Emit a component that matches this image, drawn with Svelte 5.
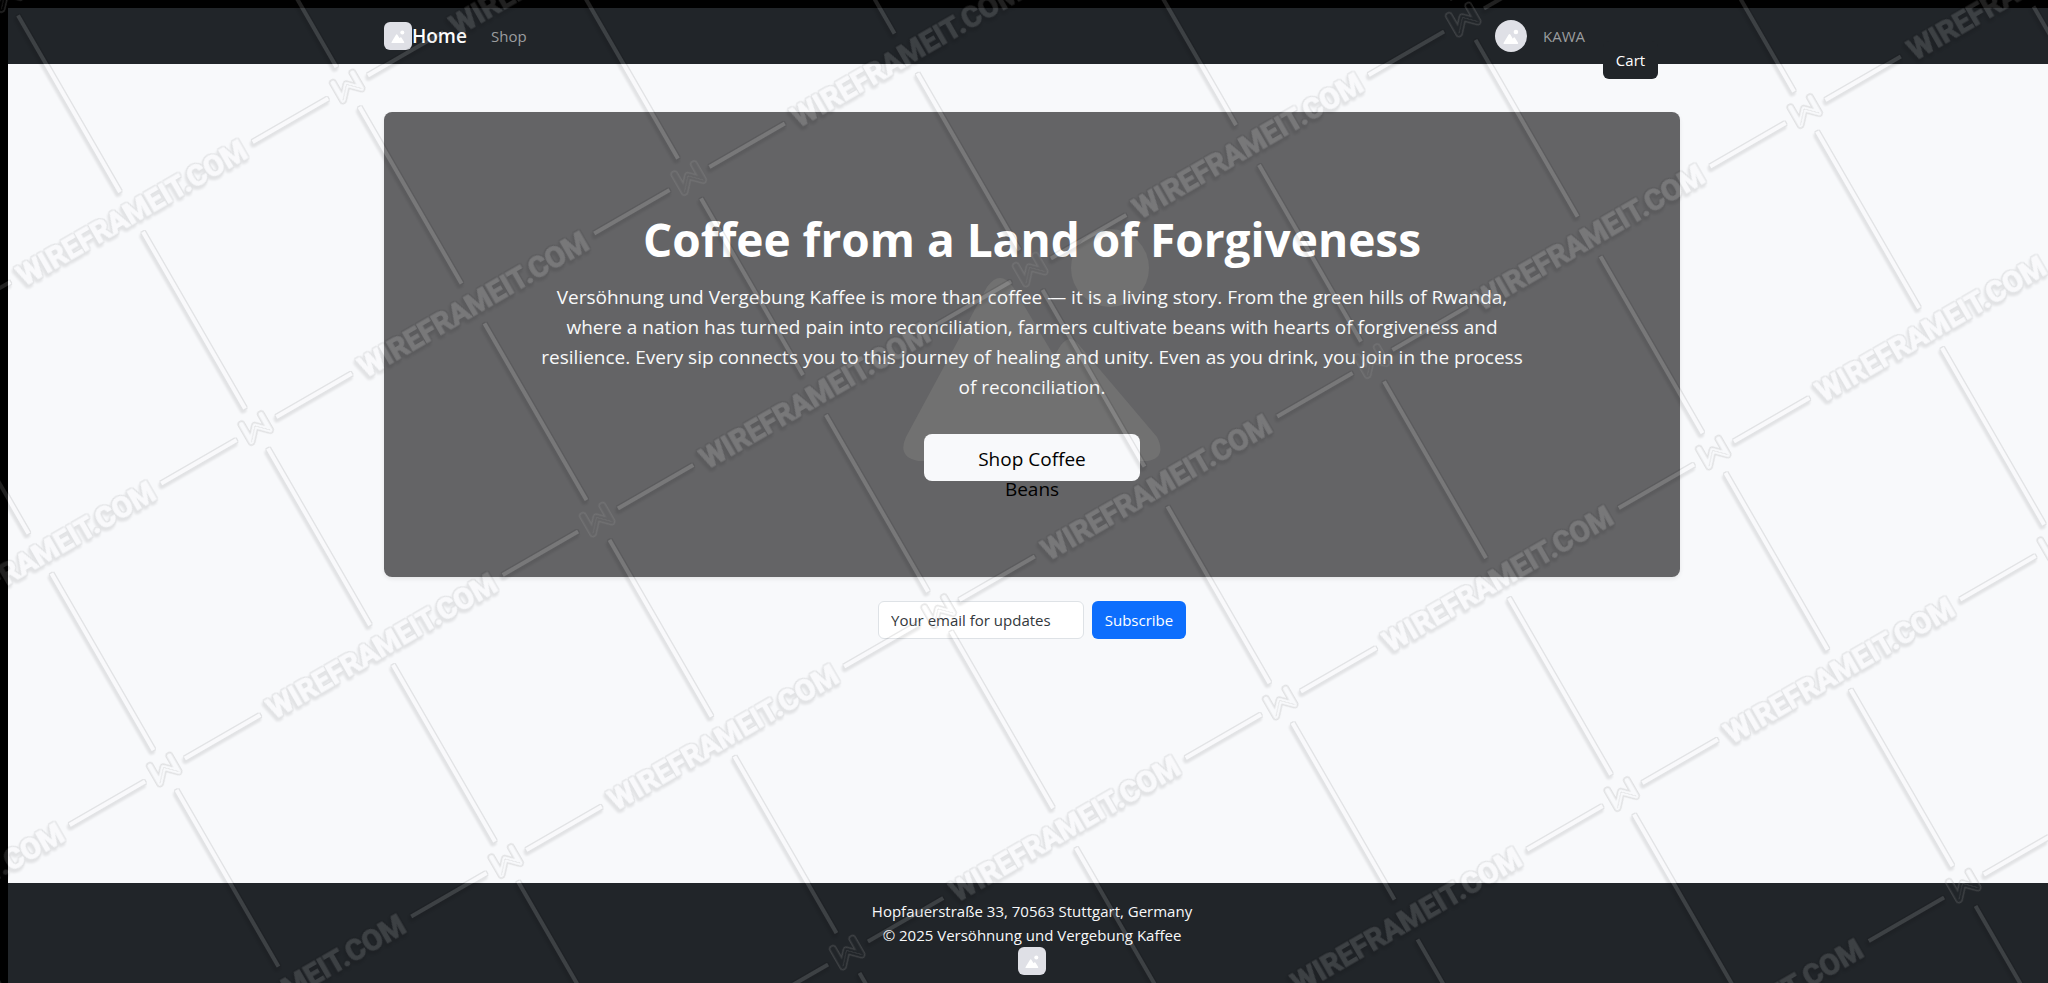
<script>
  const lines = [
    [23, 0, 110, 0], [-110, 0, -23, 0],
    [273, 250, 360, 250], [140, 250, 227, 250],
    [0, 23, 0, 227], [0, 273, 0, 477], [0, -227, 0, -23],
    [250, 23, 250, 227], [250, 273, 250, 477], [250, -227, 250, -23]
  ];
  const labels = [[250, 0], [-250, 0], [0, 250], [500, 250]];
  const marks = [[0, 0], [250, 250]];
</script>

{#snippet picture()}
  <svg viewBox="0 0 28 28" aria-hidden="true">
    <path d="M7.600 20L12 12.700Q12.700 11.700 13.400 12.700L15.600 16.300L16.200 15.500Q16.800 14.800 17.400 15.500L20.200 20Q20.500 21 19.800 21H7.800Q7.100 21 7.600 20Z" fill="#fff" />
    <circle cx="18.300" cy="10.500" r="2" fill="#fff" />
  </svg>
{/snippet}

<div class="page">
  <nav>
    <div class="container bar">
      <a class="brand" href="#home"><span class="thumb">{@render picture()}</span>Home</a>
      <a class="link" href="#shop">Shop</a>
      <div class="account">
        <span class="thumb round">{@render picture()}</span>
        <a class="link" href="#account">KAWA</a>
        <button class="cart" type="button">Cart</button>
      </div>
    </div>
  </nav>

  <main>
    <section class="hero container">
      <svg class="backdrop" viewBox="0 0 260 232" aria-hidden="true">
        <g fill="#717171">
          <circle cx="207" cy="39" r="39" />
          <path d="M84 58Q97 40 110 58L151 127L158 116Q167 104 176 116L254 208Q264 228 245 232H15Q-6 228 3 208Z" />
        </g>
      </svg>
      <h1>Coffee from a Land of Forgiveness</h1>
      <p>Versöhnung und Vergebung Kaffee is more than coffee — it is a living story. From the green hills of Rwanda, where a nation has turned pain into reconciliation, farmers cultivate beans with hearts of forgiveness and resilience. Every sip connects you to this journey of healing and unity. Even as you drink, you join in the process of reconciliation.</p>
      <a class="shop" href="#shop">Shop Coffee Beans</a>
    </section>
    <form>
      <input type="email" placeholder="Your email for updates" aria-label="Your email for updates" />
      <button class="subscribe" type="button">Subscribe</button>
    </form>
  </main>

  <footer>
    <div>Hopfauerstraße 33, 70563 Stuttgart, Germany</div>
    <div>© 2025 Versöhnung und Vergebung Kaffee</div>
    <span class="thumb">{@render picture()}</span>
  </footer>

  <svg class="watermark" aria-hidden="true">
    <defs>
      <mask id="hollow" maskUnits="userSpaceOnUse" x="-20" y="-20" width="40" height="40">
        <path class="mark" stroke="#fff" stroke-width="8" d="M-11 -11V9L0 -3L11 8V-10" />
        <path class="mark" stroke="#000" stroke-width="5" d="M-11 -11V9L0 -3L11 8V-10" />
        <path class="mark" stroke="#fff" stroke-width="1" d="M-11 9L0 -3L11 8" />
      </mask>
      <pattern id="tile" x="-125" y="-125" width="500" height="500" patternUnits="userSpaceOnUse" patternTransform="translate(1031 270) rotate(-30)" viewBox="-125 -125 500 500">
        {#each lines as [x1, y1, x2, y2]}
          <line {x1} {y1} {x2} {y2} />
        {/each}
        {#each labels as [x, y]}
          <text {x} y={y + 11}>WIREFRAMEIT.COM</text>
        {/each}
      </pattern>
      <pattern id="marks" x="-125" y="-125" width="500" height="500" patternUnits="userSpaceOnUse" patternTransform="translate(1031 270) rotate(-30)" viewBox="-125 -125 500 500">
        {#each marks as [x, y]}
          <g transform="translate({x} {y})">
            <rect x="-20" y="-20" width="40" height="40" fill="#999" fill-opacity="0.25" mask="url(#hollow)" />
          </g>
        {/each}
      </pattern>
      <filter id="emboss" x="0" y="0" width="100%" height="100%" color-interpolation-filters="sRGB">
        <feMorphology in="SourceAlpha" operator="dilate" radius="1" result="rim" />
        <feOffset in="rim" dx="-1" dy="3" result="moved" />
        <feGaussianBlur in="moved" stdDeviation="1" result="soft" />
        <feMerge result="both">
          <feMergeNode in="rim" />
          <feMergeNode in="soft" />
        </feMerge>
        <feComposite in="both" in2="SourceAlpha" operator="out" result="outer" />
        <feComponentTransfer in="outer" result="dark">
          <feFuncA type="linear" slope="0.09" />
        </feComponentTransfer>
        <feComponentTransfer in="SourceGraphic" result="light">
          <feFuncA type="linear" slope="0.13" />
        </feComponentTransfer>
        <feMerge>
          <feMergeNode in="dark" />
          <feMergeNode in="light" />
        </feMerge>
      </filter>
    </defs>
    <rect width="100%" height="100%" fill="url(#tile)" filter="url(#emboss)" />
    <rect width="100%" height="100%" fill="url(#marks)" />
  </svg>
</div>

<style>
  :global(body) { margin: 0; background: #000; }
  * { box-sizing: border-box; }
  .page {
    position: relative;
    display: flex;
    flex-direction: column;
    min-height: 100vh;
    padding: 8px 0 0 8px;
    overflow: hidden;
    font: 15px/24px "Open Sans", "Noto Sans", sans-serif;
    color: #f8f9fa;
  }
  a { color: inherit; text-decoration: none; }
  nav { position: relative; z-index: 1; background: #212529; padding-left: 8px; }
  .container { width: 100%; max-width: 1296px; margin: 0 auto; }
  .bar { display: flex; align-items: center; height: 56px; }
  .brand { display: flex; align-items: center; font-size: 19px; font-weight: 600; color: #fff; }
  .link { color: #9b9d9f; }
  .brand + .link { margin-left: 24px; }
  .account { display: flex; align-items: center; gap: 16px; height: 56px; margin: 0 22px 0 auto; }
  .thumb { display: block; width: 28px; height: 28px; border-radius: 6px; background: #dfe0e6; }
  .thumb svg { display: block; width: 100%; height: 100%; }
  .round { width: 32px; height: 32px; border-radius: 50%; }
  .account .link { width: 44px; }
  .cart {
    width: 55px; height: 38px; margin-top: 48px; padding: 0;
    border: 0; border-radius: 6px; background: #212529; color: #fff;
    font: inherit;
  }
  main {
    flex: 1; display: flex; flex-direction: column; align-items: center;
    padding: 48px 0 0 8px; background: #f8f9fb;
  }
  .hero {
    position: relative;
    display: flex; flex-direction: column; align-items: center;
    padding: 96px 16px;
    border-radius: 8px; background: #646466; text-align: center;
    box-shadow: 0 2px 4px rgba(0, 0, 0, 0.08);
  }
  .backdrop { position: absolute; left: 519px; top: 117px; width: 260px; height: 232px; }
  h1 { position: relative; margin: 0 0 12px; font-size: 46px; line-height: 62px; font-weight: 700; color: #fff; }
  p { position: relative; width: 1000px; max-width: 100%; margin: 0 0 32px; font-size: 19px; line-height: 30px; }
  .shop {
    position: relative; width: 216px; height: 47px; padding: 10px 48px;
    border-radius: 8px; background: #f8f9fb; color: #000; font-size: 19px; line-height: 30px;
  }
  form { display: flex; gap: 8px; margin: 24px 0; }
  input {
    width: 206px; height: 38px; padding: 0 12px; border: 1px solid #dee2e6;
    border-radius: 6px; background: #fff; font: inherit;
  }
  input::placeholder { color: #33373b; opacity: 1; }
  .subscribe {
    width: 94px; height: 38px; padding: 0; border: 0; border-radius: 6px;
    background: #0d6efd; color: #fff; font: inherit;
  }
  footer {
    display: flex; flex-direction: column; align-items: center;
    height: 100px; padding: 16px 0 0 8px; background: #212529;
  }
  .watermark { position: absolute; inset: 0; z-index: 2; width: 100%; height: 100%; pointer-events: none; }
  .watermark text { font: 700 29px Roboto, sans-serif; text-anchor: middle; fill: #fff; stroke: #fff; stroke-width: 1; }
  .watermark line { stroke: #fff; stroke-width: 4; }
  .mark { fill: none; stroke-linecap: round; stroke-linejoin: round; }
</style>
